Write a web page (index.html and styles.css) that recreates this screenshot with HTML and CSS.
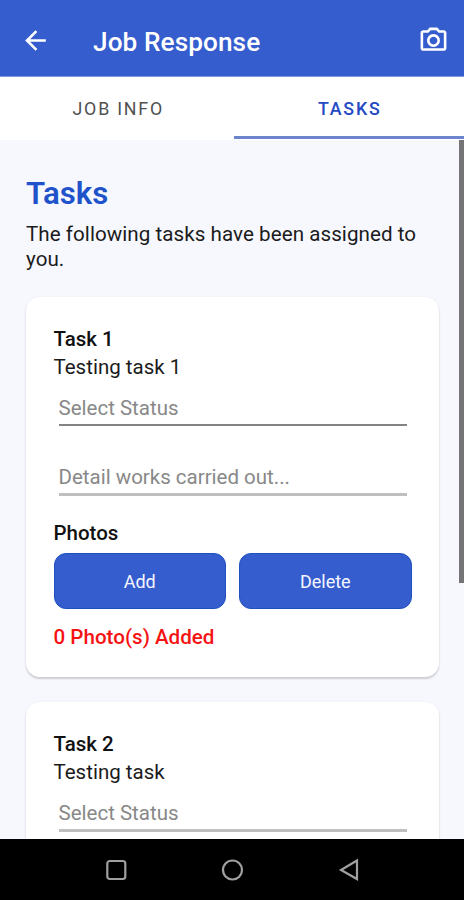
FILE: index.html
```html
<!DOCTYPE html>
<html lang="en">
<head>
<meta charset="utf-8">
<title>Job Response</title>
<link rel="stylesheet" href="styles.css">
</head>
<body>
<div class="screen">
  <header class="appbar">
    <svg class="icon" viewBox="0 0 24 24"><path d="M20 11H7.83l5.59-5.59L12 4l-8 8 8 8 1.41-1.41L7.83 13H20v-2z"/></svg>
    <h1 class="title">Job Response</h1>
    <svg class="icon" viewBox="0 0 24 24"><path d="M20 4h-3.17L15 2H9L7.17 4H4c-1.1 0-2 .9-2 2v12c0 1.1.9 2 2 2h16c1.1 0 2-.9 2-2V6c0-1.1-.9-2-2-2zm0 14H4V6h4.05l1.83-2h4.24l1.83 2H20v12zM12 7c-2.76 0-5 2.24-5 5s2.240 5 5 5 5-2.240 5-5-2.240-5-5-5zm0 8c-1.650 0-3-1.350-3-3s1.350-3 3-3 3 1.350 3 3-1.350 3-3 3z"/></svg>
  </header>
  <nav class="tabs">
    <div class="tab"><span>JOB INFO</span></div>
    <div class="tab active"><span>TASKS</span></div>
  </nav>
  <main class="content">
    <div class="scrollbar"></div>
    <h2 class="heading">Tasks</h2>
    <p class="intro">The following tasks have been assigned to<br>you.</p>
    <section class="card">
      <h3 class="label">Task 1</h3>
      <p class="desc">Testing task 1</p>
      <div class="field select dark">Select Status</div>
      <div class="field detail">Detail works carried out...</div>
      <h3 class="label">Photos</h3>
      <div class="buttons">
        <button class="btn">Add</button>
        <button class="btn">Delete</button>
      </div>
      <p class="count">0 Photo(s) Added</p>
    </section>
    <section class="card">
      <h3 class="label">Task 2</h3>
      <p class="desc">Testing task</p>
      <div class="field select">Select Status</div>
    </section>
  </main>
  <footer class="navbar">
    <svg viewBox="0 0 24 24"><rect x="3.300" y="3" width="18" height="18" rx="2.500"/></svg>
    <svg viewBox="0 0 24 24"><circle cx="12.500" cy="12" r="9.500"/></svg>
    <svg viewBox="0 0 24 24"><path d="M21 2.500v18.500L5 12z"/></svg>
  </footer>
</div>
</body>
</html>
```
FILE: styles.css
```css
* { box-sizing: border-box; margin: 0; padding: 0; }
body { font-family: Roboto, sans-serif; background: #000; color: #1b1b1b; }
.screen { width: 464px; height: 900px; display: flex; flex-direction: column; overflow: hidden; }
.appbar { flex: none; height: 77px; background: #355dcd; border-bottom: 1px solid #7f97df; display: flex; align-items: center; padding: 5px 15px 0 20px; }
.icon { width: 31px; height: 31px; fill: #fff; }
.title { flex: 1; margin-left: 42px; font-size: 26.2px; letter-spacing: 0.08px; font-weight: 500; color: #fff; padding-top: 3px; }
.tabs { flex: none; height: 63px; background: #fff; display: flex; }
.tab { flex: 1; display: flex; align-items: center; justify-content: center; font-size: 17.8px; letter-spacing: 1.8px; color: #505050; margin-bottom: 1px; padding: 3px 0 0 4px; border-bottom: 3px solid transparent; }
.tab.active { color: #2349c4; font-weight: 500; border-bottom-color: #6c83cd; margin-left: 1px; padding-left: 2px; }
.content { position: relative; flex: 1; min-height: 0; overflow: hidden; background: #f7f8fe; padding: 35px 25px 0 26px; }
.scrollbar { position: absolute; right: 0; top: 0; width: 5px; height: 443px; background: #757577; }
.heading { font-size: 31.2px; line-height: 36px; font-weight: 600; color: #2053ca; margin-bottom: 11px; padding-top: 1px; }
.intro { font-size: 20.6px; line-height: 25px; letter-spacing: 0.05px; margin-top: -1px; }
.card { background: #fff; border-radius: 14px; margin-top: 25px; height: 380px; padding: 29px 27.5px 0 27.5px; box-shadow: 0 2px 2px #ccccd0, 0 0 2px #e9eaf0; }
.label { font-size: 20.5px; line-height: 26px; font-weight: 500; color: #111; }
.desc { font-size: 20.5px; line-height: 30px; }
.field { margin: 0 5px; font-size: 20.5px; line-height: 26px; color: #888; border-bottom: 3px solid #bfbfbf; }
.select { height: 45px; padding-top: 13px; }
.select.dark { height: 44px; border-bottom: 2px solid #838383; }
.detail { height: 70px; padding-top: 38px; margin-bottom: 24px; }
.buttons { display: flex; gap: 13px; margin-top: 7px; }
.btn { flex: 1; height: 56px; border: 1px solid #2050bd; border-radius: 12px; background: #355dcd; color: #f4f6ff; font: 400 18px Roboto, sans-serif; }
.count { font-size: 20.6px; line-height: 26px; font-weight: 500; color: #f61313; margin-top: 15px; }
.navbar { flex: none; height: 61px; background: #000; display: flex; justify-content: center; align-items: center; gap: 92px; }
.navbar svg { width: 24px; height: 24px; fill: none; stroke: #a0a0a0; stroke-width: 2.2; }
```
